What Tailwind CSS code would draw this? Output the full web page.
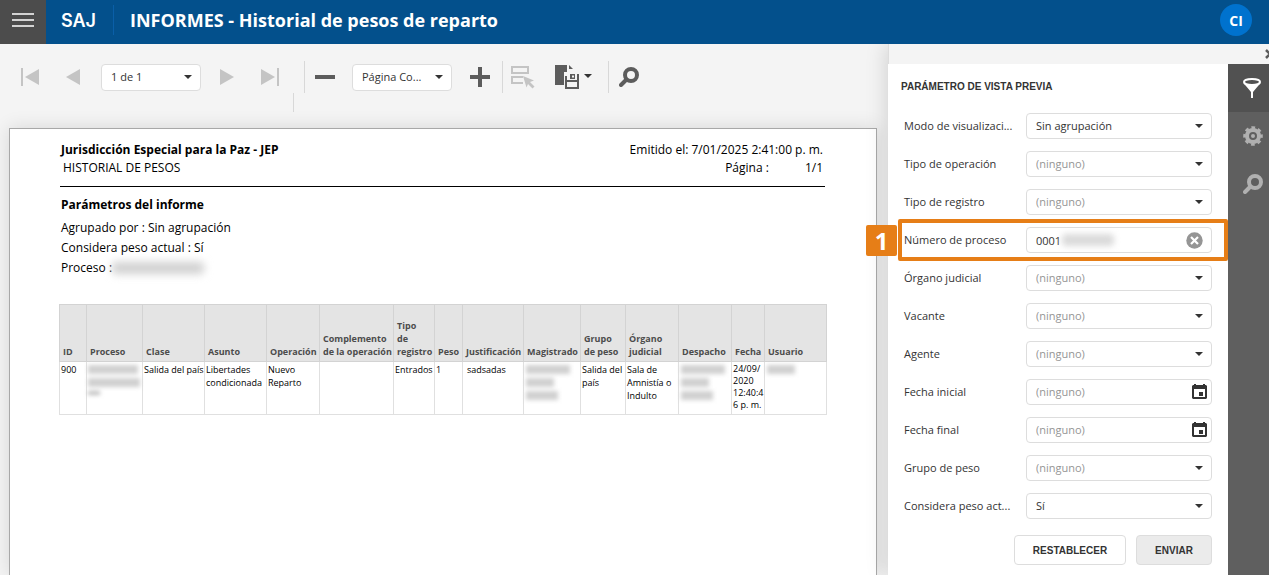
<!DOCTYPE html>
<html lang="es">
<head>
<meta charset="utf-8">
<title>INFORMES - Historial de pesos de reparto</title>
<script src="https://cdn.jsdelivr.net/npm/@tailwindcss/browser@4"></script>
</head>
<body class="flex h-screen flex-col overflow-hidden bg-[#f4f4f4] font-['Open_Sans','Noto_Sans',sans-serif] text-[#333]">
<header class="flex h-11 shrink-0 items-center bg-[#03508c] text-white">
  <button aria-label="Menú" class="flex h-11 w-[46px] items-center justify-center bg-[#4c4c4c] pb-1">
    <svg width="22" height="14" viewBox="0 0 22 14"><path d="M0 1h22M0 7h22M0 13h22" stroke="#fff" stroke-width="1.3"/></svg>
  </button>
  <span class="mb-[3px] ml-[15px] w-[52px] font-[Inter,sans-serif] text-[18px] leading-5 font-semibold">SAJ</span>
  <div class="mb-1 h-[30px] w-px bg-[#0a5fa8]"></div>
  <h1 class="mb-1 ml-4 text-[18px] leading-6 font-bold whitespace-nowrap">INFORMES - Historial de pesos de reparto</h1>
  <button class="mr-[17px] mb-1 ml-auto size-8 rounded-full bg-[#0072ce] text-[14px] font-bold">CI</button>
</header>

<div class="flex min-h-0 flex-1">
  <main class="flex min-w-0 flex-1 flex-col">
    <div class="flex h-[49px] shrink-0 items-end pl-[21px] text-[#5c5c5c]">
      <div class="flex h-8 items-center">
        <button aria-label="Primera página" class="text-[#c4c4c4]"><svg width="18" height="18" viewBox="0 0 18 18" fill="currentColor"><path d="M0 0h2v18H0zM18 1v16L4 9z"/></svg></button>
        <button aria-label="Página anterior" class="ml-[27px] text-[#c4c4c4]"><svg width="14" height="16" viewBox="0 0 14 16" fill="currentColor"><path d="M14 0v16L0 8z"/></svg></button>
        <div class="relative ml-[21px] w-[100px]">
          <select aria-label="Página" class="block h-[27px] w-full appearance-none rounded border border-[#ddd] bg-white pl-[9px] text-[11px] text-[#333]"><option>1 de 1</option></select>
          <svg class="pointer-events-none absolute top-[11px] right-[9px]" width="8" height="4" viewBox="0 0 8 4"><path d="M0 0h8L4 4z" fill="#333"/></svg>
        </div>
        <button aria-label="Página siguiente" class="ml-[19px] text-[#c4c4c4]"><svg width="14" height="16" viewBox="0 0 14 16" fill="currentColor"><path d="M0 0v16l14-8z"/></svg></button>
        <button aria-label="Última página" class="ml-[27px] text-[#c4c4c4]"><svg width="18" height="18" viewBox="0 0 18 18" fill="currentColor"><path d="M16 0h2v18h-2zM0 1v16l14-8z"/></svg></button>
        <div class="ml-[25px] h-8 w-px bg-[#d8d8d8]"></div>
        <button aria-label="Alejar" class="ml-[10px]"><svg width="20" height="20" viewBox="0 0 20 20" fill="currentColor"><path d="M0 8h20v4H0z"/></svg></button>
        <div class="relative ml-[17px] w-[100px]">
          <select aria-label="Zoom" class="block h-[27px] w-full appearance-none rounded border border-[#ddd] bg-white pl-[9px] text-[11px] text-[#333]"><option>Página Co...</option></select>
          <svg class="pointer-events-none absolute top-[11px] right-[9px]" width="8" height="4" viewBox="0 0 8 4"><path d="M0 0h8L4 4z" fill="#333"/></svg>
        </div>
        <button aria-label="Acercar" class="ml-[18px]"><svg width="20" height="20" viewBox="0 0 20 20" fill="currentColor"><path d="M8 0h4v8h8v4h-8v8H8v-8H0V8h8z"/></svg></button>
        <div class="ml-3 h-8 w-px bg-[#d8d8d8]"></div>
        <button aria-label="Resaltar campos" class="ml-2 text-[#c4c4c4]"><svg width="24" height="24" viewBox="0 0 24 24"><path d="M1 2h16v6H1zM12 18H1v-6h11" fill="none" stroke="currentColor" stroke-width="2"/><path d="M12 11l11 4.500-4 1.500 4.500 4.500-2 2-4.500-4.500-1.500 3.500z" fill="currentColor"/></svg></button>
        <button aria-label="Exportar" class="ml-5 flex items-center"><svg width="25" height="26" viewBox="0 0 25 26"><path d="M0 1h12v7H9v13H0zM14 1l4 4h-4z" fill="currentColor"/><path d="M11 12v12h12V10M11 17h12" fill="none" stroke="currentColor" stroke-width="2"/><path fill-rule="evenodd" d="M15 10h5v5h-5zM17 11.500v2h2v-2z" fill="currentColor"/></svg><svg class="mb-[2px] ml-1" width="8" height="4" viewBox="0 0 8 4"><path d="M0 0h8L4 4z" fill="#333"/></svg></button>
        <div class="ml-4 h-8 w-px bg-[#d8d8d8]"></div>
        <button aria-label="Buscar" class="ml-[10px]"><svg width="20" height="20" viewBox="0 0 20 20" fill="none" stroke="currentColor"><circle cx="12" cy="8" r="6" stroke-width="4"/><path d="M7.500 12.500L2 18" stroke-width="4" stroke-linecap="round"/></svg></button>
      </div>
    </div>
    <div class="ml-[293px] h-[19px] w-px shrink-0 bg-[#d8d8d8]"></div>

    <article class="mt-4 mr-[11px] ml-[9px] flex-1 border border-b-0 border-[#a8a8a8] bg-white pr-[51px] pl-[49px] pt-3 text-[12px] text-black shadow-[0_0_18px_rgba(0,0,0,0.12)]">
      <div class="ml-px flex h-[46px] justify-between border-b border-black px-[1px] leading-[18px]">
        <div>
          <h2 class="font-bold">Jurisdicción Especial para la Paz - JEP</h2>
          <p class="pl-[2px]">HISTORIAL DE PESOS</p>
        </div>
        <div class="pr-px text-right">
          <p>Emitido el: 7/01/2025 2:41:00 p. m.</p>
          <p class="flex justify-end gap-9"><span>Página :</span><span>1/1</span></p>
        </div>
      </div>
      <h3 class="mt-[9px] pl-[2px] leading-[18px] font-bold">Parámetros del informe</h3>
      <div class="mt-1 pl-[2px] leading-5">
        <p>Agrupado por : Sin agrupación</p>
        <p>Considera peso actual : Sí</p>
        <p class="flex items-center">Proceso :<span class="h-3 w-[92px] rounded bg-[#d0d0d0] blur-xs"></span></p>
      </div>
      <table class="mt-[26px] w-full table-fixed border-collapse text-[9px] leading-[13px] whitespace-nowrap">
        <colgroup><col class="w-[27px]"><col class="w-[56px]"><col class="w-[62px]"><col class="w-[62px]"><col class="w-[53px]"><col class="w-[74px]"><col class="w-[41px]"><col class="w-[28px]"><col class="w-[61px]"><col class="w-[57px]"><col class="w-[45px]"><col class="w-[53px]"><col class="w-[53px]"><col class="w-[33px]"><col class="w-[62px]"></colgroup>
        <thead>
          <tr class="h-[57px] bg-[#e4e4e4] text-left align-bottom text-[#4c4c4c] *:border *:border-[#d3d3d3] *:pb-[3px] *:pl-[3px] *:font-bold">
            <th>ID</th><th>Proceso</th><th>Clase</th><th>Asunto</th><th>Operación</th><th>Complemento<br>de la operación</th><th>Tipo<br>de<br>registro</th><th>Peso</th><th>Justificación</th><th>Magistrado</th><th>Grupo<br>de peso</th><th>Órgano<br>judicial</th><th>Despacho</th><th>Fecha</th><th>Usuario</th>
          </tr>
        </thead>
        <tbody>
          <tr class="h-[53px] align-top *:border *:border-[#e0e0e0] *:pt-px *:pl-px">
            <td>900</td>
            <td><div class="mt-[2px] flex flex-col gap-1 blur-[2px]"><i class="h-[9px] w-[50px] bg-[#d0d0d0]"></i><i class="h-[9px] w-[52px] bg-[#d0d0d0]"></i><i class="h-1 w-3 bg-[#bbb]"></i></div></td>
            <td>Salida del país</td><td>Libertades<br>condicionada</td><td>Nuevo<br>Reparto</td><td></td><td>Entrados</td><td>1</td><td class="indent-[3px]">sadsadas</td>
            <td><div class="mt-[2px] ml-px flex flex-col gap-1 blur-[2px]"><i class="h-[9px] w-11 bg-[#d0d0d0]"></i><i class="h-[9px] w-7 bg-[#d0d0d0]"></i><i class="h-[9px] w-8 bg-[#d0d0d0]"></i></div></td>
            <td>Salida del<br>país</td><td>Sala de<br>Amnistía o<br>Indulto</td>
            <td><div class="mt-[2px] ml-px flex flex-col gap-1 blur-[2px]"><i class="h-[9px] w-11 bg-[#d0d0d0]"></i><i class="h-[9px] w-7 bg-[#d0d0d0]"></i><i class="h-[9px] w-8 bg-[#d0d0d0]"></i></div></td>
            <td class="leading-3">24/09/<br>2020<br>12:40:4<br>6 p. m.</td>
            <td><div class="mt-[2px] ml-px h-[9px] w-7 bg-[#d0d0d0] blur-[2px]"></div></td>
          </tr>
        </tbody>
      </table>
    </article>
  </main>

  <aside class="relative flex w-[381px] shrink-0 flex-col bg-[#f4f4f4] shadow-[-2px_0_20px_rgba(0,0,0,0.14)] [clip-path:inset(0_0_0_-40px)]">
    <div class="flex h-5 shrink-0 items-center justify-end overflow-hidden border-l border-[#ddd]">
      <button aria-label="Cerrar" class="w-1 overflow-hidden"><svg class="max-w-none" width="10" height="10" viewBox="0 0 10 10"><path d="M1 1l8 8M9 1L1 9" stroke="#5c5c5c" stroke-width="2.500"/></svg></button>
    </div>
    <div class="flex min-h-0 flex-1">
      <form class="flex-1 bg-white px-4 pt-[14px] text-[11px]">
        <h2 class="-ml-[3px] font-['Liberation_Sans',Arial,sans-serif] text-[10px] leading-[18px] font-bold">PARÁMETRO DE VISTA PREVIA</h2>
        <div class="mt-[17px] flex flex-col gap-3">
          <div class="flex h-[26px] items-center"><label for="f1" class="w-[122px]">Modo de visualizaci...</label><div class="relative flex-1"><select id="f1" class="block h-[26px] w-full appearance-none rounded border border-[#ddd] bg-white pl-[9px]"><option>Sin agrupación</option></select><svg class="pointer-events-none absolute top-[11px] right-[9px]" width="8" height="4" viewBox="0 0 8 4"><path d="M0 0h8L4 4z" fill="#333"/></svg></div></div>
          <div class="flex h-[26px] items-center"><label for="f2" class="w-[122px]">Tipo de operación</label><div class="relative flex-1"><select id="f2" class="block h-[26px] w-full appearance-none rounded border border-[#ddd] bg-white pl-[9px] text-[#959595]"><option>(ninguno)</option></select><svg class="pointer-events-none absolute top-[11px] right-[9px]" width="8" height="4" viewBox="0 0 8 4"><path d="M0 0h8L4 4z" fill="#333"/></svg></div></div>
          <div class="flex h-[26px] items-center"><label for="f3" class="w-[122px]">Tipo de registro</label><div class="relative flex-1"><select id="f3" class="block h-[26px] w-full appearance-none rounded border border-[#ddd] bg-white pl-[9px] text-[#959595]"><option>(ninguno)</option></select><svg class="pointer-events-none absolute top-[11px] right-[9px]" width="8" height="4" viewBox="0 0 8 4"><path d="M0 0h8L4 4z" fill="#333"/></svg></div></div>
          <div class="relative flex h-[26px] items-center"><label for="f4" class="w-[122px]">Número de proceso</label><div class="relative flex-1"><input id="f4" value="0001" class="block h-[26px] w-full rounded border border-[#ddd] bg-white pl-[9px]"><span class="absolute top-[7px] left-9 h-3 w-[52px] rounded bg-[#dadada] blur-[3px]"></span><button type="button" aria-label="Borrar" class="absolute top-[5px] right-[9px]"><svg width="17" height="17" viewBox="0 0 17 17"><circle cx="8.500" cy="8.500" r="8.200" fill="#959595"/><path d="M5 5l7 7M12 5l-7 7" stroke="#fff" stroke-width="2.200"/></svg></button></div>
            <div class="pointer-events-none absolute -top-2 -right-4 -bottom-2 -left-[6px] rounded-xs border-4 border-[#e67e17]"></div>
            <div class="absolute -top-[2px] -left-[38px] flex h-[31px] w-[31px] items-center justify-center rounded-xs bg-[#e67e17] font-['Noto_Sans',sans-serif] text-[24px] leading-6 font-bold text-white">1</div>
          </div>
          <div class="flex h-[26px] items-center"><label for="f5" class="w-[122px]">Órgano judicial</label><div class="relative flex-1"><select id="f5" class="block h-[26px] w-full appearance-none rounded border border-[#ddd] bg-white pl-[9px] text-[#959595]"><option>(ninguno)</option></select><svg class="pointer-events-none absolute top-[11px] right-[9px]" width="8" height="4" viewBox="0 0 8 4"><path d="M0 0h8L4 4z" fill="#333"/></svg></div></div>
          <div class="flex h-[26px] items-center"><label for="f6" class="w-[122px]">Vacante</label><div class="relative flex-1"><select id="f6" class="block h-[26px] w-full appearance-none rounded border border-[#ddd] bg-white pl-[9px] text-[#959595]"><option>(ninguno)</option></select><svg class="pointer-events-none absolute top-[11px] right-[9px]" width="8" height="4" viewBox="0 0 8 4"><path d="M0 0h8L4 4z" fill="#333"/></svg></div></div>
          <div class="flex h-[26px] items-center"><label for="f7" class="w-[122px]">Agente</label><div class="relative flex-1"><select id="f7" class="block h-[26px] w-full appearance-none rounded border border-[#ddd] bg-white pl-[9px] text-[#959595]"><option>(ninguno)</option></select><svg class="pointer-events-none absolute top-[11px] right-[9px]" width="8" height="4" viewBox="0 0 8 4"><path d="M0 0h8L4 4z" fill="#333"/></svg></div></div>
          <div class="flex h-[26px] items-center"><label for="f8" class="w-[122px]">Fecha inicial</label><div class="relative flex-1"><input id="f8" placeholder="(ninguno)" class="block h-[26px] w-full rounded border border-[#ddd] bg-white pb-px pl-[9px] placeholder:text-[#959595]"><svg class="pointer-events-none absolute top-[5px] right-[5px]" width="15" height="16" viewBox="0 0 15 16"><path fill-rule="evenodd" d="M2 0h2v1h7V0h2v1h1l1 1v12l-1 1H1l-1-1V2l1-1h1zM2 5v8h11V5z" fill="#333"/><path d="M7 8h4v4H7z" fill="#333"/></svg></div></div>
          <div class="flex h-[26px] items-center"><label for="f9" class="w-[122px]">Fecha final</label><div class="relative flex-1"><input id="f9" placeholder="(ninguno)" class="block h-[26px] w-full rounded border border-[#ddd] bg-white pb-px pl-[9px] placeholder:text-[#959595]"><svg class="pointer-events-none absolute top-[5px] right-[5px]" width="15" height="16" viewBox="0 0 15 16"><path fill-rule="evenodd" d="M2 0h2v1h7V0h2v1h1l1 1v12l-1 1H1l-1-1V2l1-1h1zM2 5v8h11V5z" fill="#333"/><path d="M7 8h4v4H7z" fill="#333"/></svg></div></div>
          <div class="flex h-[26px] items-center"><label for="f10" class="w-[122px]">Grupo de peso</label><div class="relative flex-1"><select id="f10" class="block h-[26px] w-full appearance-none rounded border border-[#ddd] bg-white pl-[9px] text-[#959595]"><option>(ninguno)</option></select><svg class="pointer-events-none absolute top-[11px] right-[9px]" width="8" height="4" viewBox="0 0 8 4"><path d="M0 0h8L4 4z" fill="#333"/></svg></div></div>
          <div class="flex h-[26px] items-center"><label for="f11" class="w-[122px]">Considera peso act...</label><div class="relative flex-1"><select id="f11" class="block h-[26px] w-full appearance-none rounded border border-[#ddd] bg-white pl-[9px]"><option>Sí</option></select><svg class="pointer-events-none absolute top-[11px] right-[9px]" width="8" height="4" viewBox="0 0 8 4"><path d="M0 0h8L4 4z" fill="#333"/></svg></div></div>
        </div>
        <div class="mt-4 flex justify-end gap-[10px] font-['Liberation_Sans',Arial,sans-serif] text-[10px] font-bold">
          <button type="reset" class="h-[30px] w-28 rounded border border-[#ddd] bg-white">RESTABLECER</button>
          <button type="submit" class="h-[30px] w-[76px] rounded border border-[#ddd] bg-[#ebebeb]">ENVIAR</button>
        </div>
      </form>
      <nav class="w-[41px] overflow-hidden bg-[#5f5f5f] text-[#b0b0b0]">
        <button aria-label="Parámetros" class="flex h-12 w-full items-center bg-[#515151] pl-[15px] text-white"><svg width="18" height="20" viewBox="0 0 18 20"><ellipse cx="9" cy="4" rx="8" ry="3" fill="none" stroke="currentColor" stroke-width="2"/><path d="M0 4.500c2 3.500 16 3.500 18 0L10 14v6H8v-6z" fill="currentColor"/></svg></button>
        <button aria-label="Opciones" class="flex h-12 w-full items-center pl-[15px]"><svg width="20" height="20" viewBox="0 0 20 20"><g stroke="currentColor" fill="none"><circle cx="10" cy="10" r="8.300" stroke-width="3" stroke-dasharray="3.600 2.919" stroke-dashoffset="1.800"/><circle cx="10" cy="10" r="6" stroke-width="4"/></g><circle cx="10" cy="10" r="2" fill="currentColor"/></svg></button>
        <button aria-label="Buscar" class="flex h-12 w-full items-center pl-[15px]"><svg width="20" height="20" viewBox="0 0 20 20" fill="none" stroke="currentColor"><circle cx="12" cy="8" r="6" stroke-width="4"/><path d="M7.500 12.500L2 18" stroke-width="4" stroke-linecap="round"/></svg></button>
      </nav>
    </div>
  </aside>
</div>
</body>
</html>
